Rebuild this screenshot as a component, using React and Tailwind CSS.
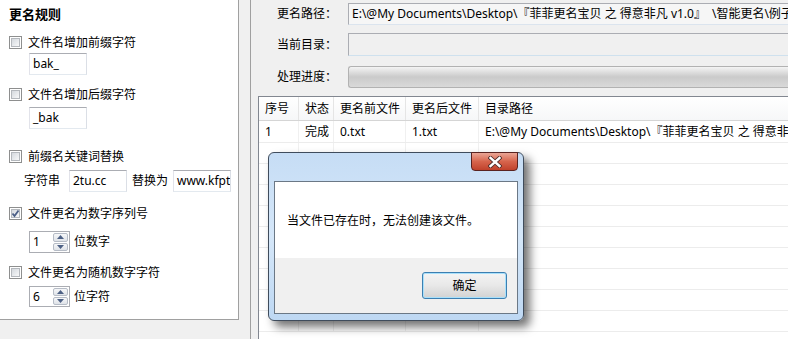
import React from 'react'

function Check({ checked }) {
  return (
    <span className="relative w-[13px] h-[13px] shrink-0 border border-[#8e8f8f] bg-white p-px flex">
      <span className="flex-1 border border-[#b4b8bd] bg-gradient-to-br from-[#d5d9de] to-[#f7f8f9]" />
      {checked && (
        <svg className="absolute left-[1px] top-[1px]" width="9" height="9" viewBox="0 0 9 9">
          <path d="M1.5 4.5 L3.5 7 L7.5 1.5" fill="none" stroke="#4a5e86" strokeWidth="1.8" />
        </svg>
      )}
    </span>
  )
}

function CheckRow({ checked, label, className }) {
  return (
    <div className={`flex items-center h-[13px] pl-[9px] ${className}`}>
      <Check checked={checked} />
      <span className="ml-[6px] leading-[13px] whitespace-nowrap">{label}</span>
    </div>
  )
}

function TextBox({ value, className }) {
  return (
    <div className={`h-[22px] border border-[#abadb3] border-l-[#e2e3ea] border-r-[#dbdfe6] border-b-[#e3e9ef] bg-white pl-[3px] leading-[20px] overflow-hidden whitespace-nowrap ${className}`}>
      {value}
    </div>
  )
}

function Arrow({ up }) {
  return (
    <svg width="7" height="4" viewBox="0 0 7 4">
      <path d={up ? 'M0 4 L3.5 0 L7 4 Z' : 'M0 0 L3.5 4 L7 0 Z'} fill="#4d6185" />
    </svg>
  )
}

function Spin({ value, label, className, h }) {
  return (
    <div className={`flex items-center pl-[29px] ${className}`}>
      <div className={`w-[41px] ${h} border border-[#abadb3] bg-white flex`}>
        <span className="flex-1 pl-[3px] leading-[19px]">{value}</span>
        <div className="w-[16px] flex flex-col gap-px py-px pr-px">
          <div className="flex-1 flex items-center justify-center rounded-[2px] border border-[#b6bcc6] bg-gradient-to-b from-[#f6f7f9] to-[#dfe3e8]">
            <Arrow up />
          </div>
          <div className="flex-1 flex items-center justify-center rounded-[2px] border border-[#b6bcc6] bg-gradient-to-b from-[#f6f7f9] to-[#dfe3e8]">
            <Arrow />
          </div>
        </div>
      </div>
      <span className="ml-[4px] whitespace-nowrap">{label}</span>
    </div>
  )
}

const cols = [
  { w: 'w-[40px]', t: '序号' },
  { w: 'w-[35px]', t: '状态' },
  { w: 'w-[72px]', t: '更名前文件' },
  { w: 'w-[73px]', t: '更名后文件' },
  { w: 'w-[320px]', t: '目录路径' },
]

const row = ['1', '完成', '0.txt', '1.txt', 'E:\\@My Documents\\Desktop\\『菲菲更名宝贝 之 得意非凡 v1.0』\u2002\\智能更名\\例子']

export default function App() {
  return (
    <div className="relative w-[788px] h-[339px] overflow-hidden bg-[#f0f0f0] flex text-[12px] text-black font-['Segoe_UI','Noto_Sans','Noto_Sans_CJK_SC',sans-serif]">

      {/* 左侧：更名规则 */}
      <div className="w-[239px] shrink-0">
        <div className="h-[320px] bg-white border-r border-b border-[#a0a0a0] flex flex-col">
          <div className="mt-[6px] pl-[9px] h-[16px] leading-[16px] text-[13px] font-bold">更名规则</div>

          <CheckRow className="mt-[14px]" label="文件名增加前缀字符" />
          <TextBox className="mt-[4px] ml-[29px] w-[58px]" value="bak_" />

          <CheckRow className="mt-[13px]" label="文件名增加后缀字符" />
          <TextBox className="mt-[6px] ml-[29px] w-[58px]" value="_bak" />

          <CheckRow className="mt-[21px]" label="前缀名关键词替换" />
          <div className="mt-[7px] flex items-center h-[22px] pl-[24px]">
            <span className="w-[45px]">字符串</span>
            <TextBox className="w-[58px]" value="2tu.cc" />
            <span className="ml-[5px] w-[41px]">替换为</span>
            <TextBox className="w-[58px]" value="www.kfpt" />
          </div>

          <CheckRow className="mt-[15px]" checked label="文件更名为数字序列号" />
          <Spin className="mt-[11px]" h="h-[22px]" value="1" label="位数字" />

          <CheckRow className="mt-[13px]" label="文件更名为随机数字字符" />
          <Spin className="mt-[7px]" h="h-[21px]" value="6" label="位字符" />
        </div>
      </div>

      {/* 分隔条 */}
      <div className="w-[11px] shrink-0" />
      <div className="w-px shrink-0 bg-[#a0a0a0]" />

      {/* 右侧 */}
      <div className="flex-1 flex flex-col pt-[3px] min-w-0">
        <div className="flex items-center h-[22px] pl-[26px]">
          <span className="w-[71px] shrink-0">更名路径：</span>
          <div className="w-[460px] shrink-0 h-[22px] border border-[#abadb3] border-r-0 border-b-[#dbe4ee] bg-[#f6f6f6] pl-[3px] leading-[20px] whitespace-nowrap overflow-hidden">
            {'E:\\@My Documents\\Desktop\\『菲菲更名宝贝 之 得意非凡 v1.0』\u2002\\智能更名\\例子'}
          </div>
        </div>
        <div className="mt-[8px] flex items-center h-[23px] pl-[26px]">
          <span className="w-[71px] shrink-0">当前目录：</span>
          <div className="w-[460px] shrink-0 h-[23px] border border-[#abadb3] border-r-0 border-b-[#cfe1ee] bg-[#f0f0f0]" />
        </div>
        <div className="mt-[10px] flex items-center h-[22px] pl-[26px]">
          <span className="w-[71px] shrink-0">处理进度：</span>
          <div className="w-[460px] shrink-0 h-[22px] rounded-l-[3px] border border-[#b2b2b2] border-r-0 bg-gradient-to-b from-[#f4f4f4] via-[#cacaca] to-[#d9d9d9]" />
        </div>

        {/* 列表 */}
        <div className="mt-[8px] ml-[7px] flex-1 border-l border-t border-[#828790] bg-white overflow-hidden">
          <div className="flex h-[24px] border-b border-[#d5d5d5] bg-gradient-to-b from-white to-[#f6f7f8]">
            {cols.map(c => (
              <div key={c.t} className={`${c.w} shrink-0 border-r border-[#e5e5e5] pl-[6px] leading-[23px] whitespace-nowrap`}>
                {c.t}
              </div>
            ))}
          </div>
          {Array.from({ length: 10 }).map((_, i) => (
            <div key={i} className={`flex ${i === 0 ? 'h-[22px]' : 'h-[21px]'} border-b border-[#ececec]`}>
              {cols.map((c, j) => (
                <div key={j} className={`${c.w} shrink-0 border-r border-[#f0f0f0] pl-[6px] leading-[21px] whitespace-nowrap overflow-hidden`}>
                  {i === 0 ? row[j] : ''}
                </div>
              ))}
            </div>
          ))}
        </div>
      </div>

      {/* 提示对话框 */}
      <div className="absolute left-[268px] top-[152px] w-[256px] h-[169px] rounded-[6px] border border-[#3f4c5c] bg-gradient-to-b from-[#c6ddf5] via-[#d5e7f9] to-[#bed8f3] shadow-[6px_6px_10px_rgba(0,0,0,0.55)] flex flex-col">
        <div className="absolute top-[-1px] right-[5px] w-[47px] h-[19px] rounded-b-[4px] border border-[#5a2320] bg-gradient-to-b from-[#e9a595] via-[#d6644c] to-[#c0412b] flex items-center justify-center">
          <svg width="14" height="12" viewBox="0 0 14 12">
            <path d="M2.5 2 L11.5 10 M11.5 2 L2.5 10" stroke="#4a2a28" strokeWidth="4.2" strokeLinecap="square" />
            <path d="M2.5 2 L11.5 10 M11.5 2 L2.5 10" stroke="#ffffff" strokeWidth="2.4" strokeLinecap="square" />
          </svg>
        </div>
        <div className="h-[28px] shrink-0" />
        <div className="mx-[5px] h-[133px] border border-[#6b7886] flex flex-col">
          <div className="h-[76px] bg-white pl-[12px] pt-[31px] leading-[16px] whitespace-nowrap">
            当文件已存在时，无法创建该文件。
          </div>
          <div className="flex-1 bg-[#f0f0f0] flex justify-end items-start pt-[14px] pr-[10px]">
            <div className="w-[85px] h-[27px] rounded-[3px] border border-[#3c7fb1] shadow-[inset_0_0_0_1px_#a8e0fb] bg-gradient-to-b from-[#f4f4f4] via-[#e8e8e8] to-[#d2d2d2] flex items-center justify-center">
              确定
            </div>
          </div>
        </div>
      </div>
    </div>
  )
}
